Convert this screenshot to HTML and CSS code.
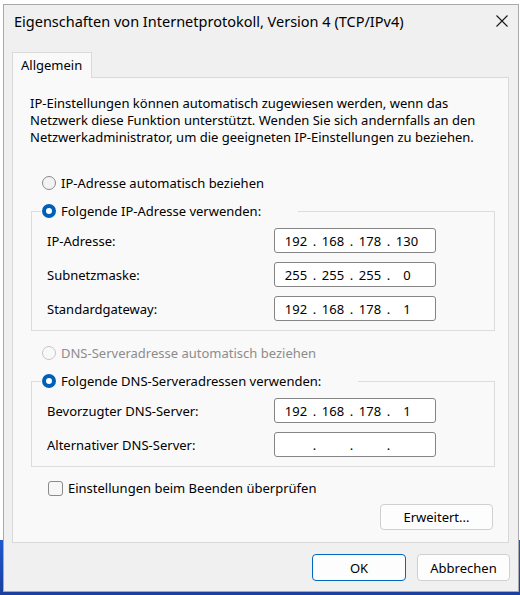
FILE: index.html
```html
<!DOCTYPE html>
<html lang="de">
<head>
<meta charset="utf-8">
<title>Eigenschaften von Internetprotokoll, Version 4 (TCP/IPv4)</title>
<link rel="stylesheet" href="styles.css">
</head>
<body>
<div class="desk">
  <div class="window">
    <div class="titlebar">
      <span class="title">Eigenschaften von Internetprotokoll, Version 4 (TCP/IPv4)</span>
      <span class="close">
        <svg width="12" height="12" viewBox="0 0 12 12"><path d="M0.5 0.5 L11.5 11.5 M11.5 0.5 L0.5 11.5" stroke="#1a1a1a" stroke-width="1.1" fill="none"/></svg>
      </span>
    </div>
    <div class="tabs"><div class="tab">Allgemein</div></div>
    <div class="panel">
      <p class="intro">IP-Einstellungen können automatisch zugewiesen werden, wenn das<br>Netzwerk diese Funktion unterstützt. Wenden Sie sich andernfalls an den<br>Netzwerkadministrator, um die geeigneten IP-Einstellungen zu beziehen.</p>

      <div class="opt"><span class="radio"></span><span>IP-Adresse automatisch beziehen</span></div>
      <fieldset class="group">
        <legend class="opt legend"><span class="radio on"></span><span>Folgende IP-Adresse verwenden:</span></legend>
        <div class="rows">
          <span class="lbl">IP-Adresse:</span>
          <div class="ip"><span class="oct">192</span><span class="dot">.</span><span class="oct">168</span><span class="dot">.</span><span class="oct">178</span><span class="dot">.</span><span class="oct">130</span></div>
          <span class="lbl">Subnetzmaske:</span>
          <div class="ip"><span class="oct">255</span><span class="dot">.</span><span class="oct">255</span><span class="dot">.</span><span class="oct">255</span><span class="dot">.</span><span class="oct">0</span></div>
          <span class="lbl">Standardgateway:</span>
          <div class="ip"><span class="oct">192</span><span class="dot">.</span><span class="oct">168</span><span class="dot">.</span><span class="oct">178</span><span class="dot">.</span><span class="oct">1</span></div>
        </div>
      </fieldset>

      <div class="opt opt2 disabled"><span class="radio"></span><span>DNS-Serveradresse automatisch beziehen</span></div>
      <fieldset class="group">
        <legend class="opt legend"><span class="radio on"></span><span>Folgende DNS-Serveradressen verwenden:</span></legend>
        <div class="rows">
          <span class="lbl">Bevorzugter DNS-Server:</span>
          <div class="ip"><span class="oct">192</span><span class="dot">.</span><span class="oct">168</span><span class="dot">.</span><span class="oct">178</span><span class="dot">.</span><span class="oct">1</span></div>
          <span class="lbl">Alternativer DNS-Server:</span>
          <div class="ip"><span class="oct"></span><span class="dot">.</span><span class="oct"></span><span class="dot">.</span><span class="oct"></span><span class="dot">.</span><span class="oct"></span></div>
        </div>
      </fieldset>

      <div class="check"><span class="box"></span><span>Einstellungen beim Beenden überprüfen</span></div>
      <div class="adv"><button class="btn adv-btn">Erweitert...</button></div>
    </div>
    <div class="footer">
      <button class="btn ok">OK</button>
      <button class="btn cancel">Abbrechen</button>
    </div>
  </div>
</div>
</body>
</html>
```

FILE: styles.css
```css
* { box-sizing: border-box; }
html, body { margin: 0; padding: 0; }
body {
  width: 520px;
  height: 595px;
  overflow: hidden;
  background: linear-gradient(#ffffff 0, #ffffff 540px, #1f56d0 540px, #1b3f9e 595px);
  font-family: "Noto Sans", "Open Sans", sans-serif;
  font-size: 13px;
  color: #000;
}
.desk {
  padding: 4px 0 0 3px;
}
.window {
  width: 516px;
  height: 588px;
  background: #f0f0f0;
  border: 1px solid #a9a9a9;
  display: flex;
  flex-direction: column;
}
.titlebar {
  height: 32px;
  display: flex;
  align-items: center;
  justify-content: space-between;
  padding: 0 10px 0 10px;
}
.title {
  font-size: 14.5px;
  color: #000;
}
.close {
  display: flex;
  width: 12px;
  height: 12px;
}
.tabs {
  padding: 15px 0 0 8px;
  display: flex;
}
.tab {
  height: 26px;
  padding: 0 9px 0 8px;
  line-height: 24px;
  background: #f9f9f9;
  border: 1px solid #d9d9d9;
  border-bottom: none;
  margin-bottom: -1px;
  position: relative;
  z-index: 1;
}
.panel {
  margin: 0 9px 0 8px;
  height: 466px;
  background: #f9f9f9;
  border: 1px solid #d9d9d9;
  padding: 17px 13px 0 17px;
  display: flex;
  flex-direction: column;
}
.intro {
  margin: 0;
  line-height: 17px;
}
.opt {
  display: flex;
  align-items: center;
  gap: 5px;
  height: 20px;
  margin-left: 12px;
  margin-top: 27px;
}
.opt2 { margin-top: 12px; }
.disabled { color: #8c8c8c; }
.radio {
  width: 14px;
  height: 14px;
  border-radius: 50%;
  border: 1px solid #8a8a8a;
  background: #f3f3f3;
  flex: none;
}
.disabled .radio { border-color: #c6c6c6; background: #f9f9f9; }
.radio.on {
  border: 4px solid #005fb8;
  background: #ffffff;
}
.group {
  margin: 8px 0 0 1px;
  padding: 0;
  border: 1px solid #dcdcdc;
  min-width: 0;
}
.legend {
  margin: 0 0 0 9px;
  padding: 0 37px 0 1px;
}
.rows {
  display: grid;
  grid-template-columns: 227px 162px;
  grid-auto-rows: 25px;
  row-gap: 9px;
  align-items: center;
  padding: 7px 0 9px 15px;
}
.ip {
  height: 25px;
  border: 1px solid #858585;
  border-radius: 3px;
  background: #fff;
  display: flex;
  align-items: center;
  padding-left: 8px;
  font-size: 13px;
}
.oct {
  width: 26px;
  text-align: center;
}
.dot {
  width: 11px;
  text-align: center;
}
.check {
  display: flex;
  align-items: center;
  gap: 5px;
  height: 20px;
  margin: 11px 0 0 18px;
}
.box {
  width: 15px;
  height: 15px;
  border: 1px solid #8a8a8a;
  border-radius: 3px;
  background: #f6f6f6;
}
.adv {
  display: flex;
  justify-content: flex-end;
  margin: 6px 2px 0 0;
}
.btn {
  font-family: inherit;
  font-size: 13px;
  color: #000;
  background: #fdfdfd;
  border: 1px solid #d0d0d0;
  border-radius: 4px;
  padding: 0;
}
.adv-btn {
  width: 113px;
  height: 26px;
}
.footer {
  display: flex;
  justify-content: flex-end;
  gap: 11px;
  padding: 11px 8px 0 0;
}
.ok {
  width: 94px;
  height: 27px;
  border: 1px solid #0067c0;
}
.cancel {
  width: 93px;
  height: 27px;
}
```
